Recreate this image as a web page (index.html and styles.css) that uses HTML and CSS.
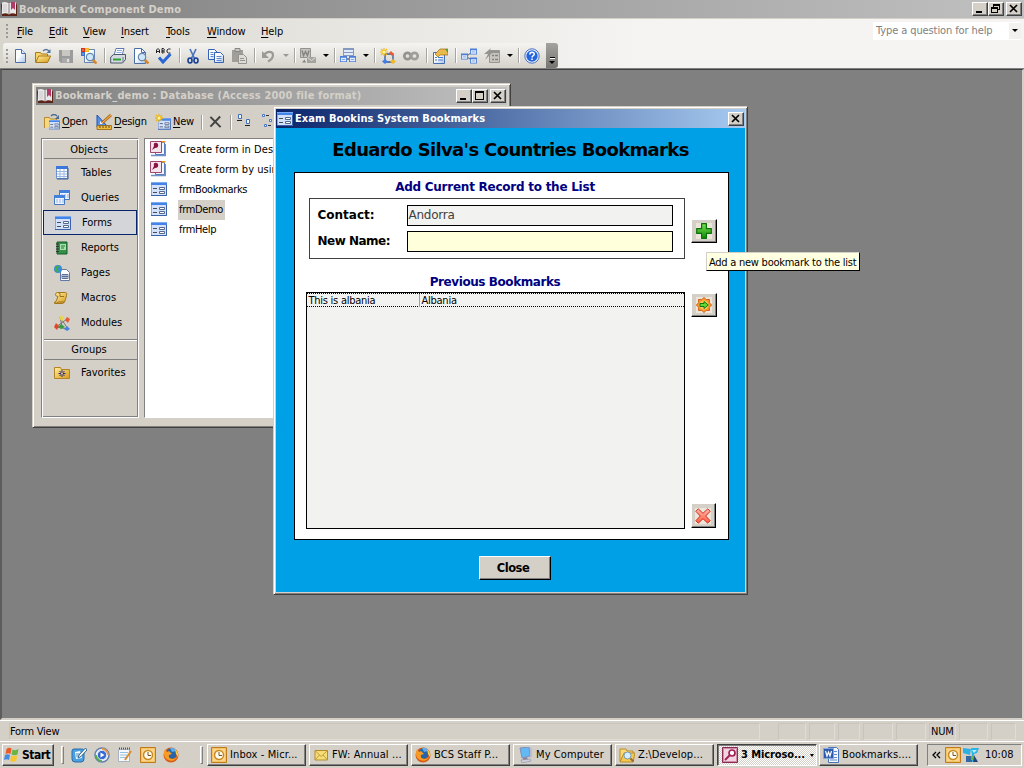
FILE: index.html
```html
<!DOCTYPE html>
<html lang="en">
<head>
<meta charset="utf-8">
<title>Bookmark Component Demo</title>
<link rel="stylesheet" href="styles.css">
</head>
<body>
<svg class="sprite" aria-hidden="true">
  <defs>
    <linearGradient id="gBlue" x1="0" y1="0" x2="0" y2="1"><stop offset="0" stop-color="#8fc0ff"/><stop offset="1" stop-color="#1c55c8"/></linearGradient>
    <linearGradient id="gGold" x1="0" y1="0" x2="1" y2="1"><stop offset="0" stop-color="#fff0a0"/><stop offset="1" stop-color="#d89a18"/></linearGradient>
    <linearGradient id="gPaper" x1="0" y1="0" x2="1" y2="1"><stop offset=".4" stop-color="#fff"/><stop offset="1" stop-color="#a9c4ea"/></linearGradient>
    <linearGradient id="gGreen" x1="0" y1="0" x2="0" y2="1"><stop offset="0" stop-color="#7be04e"/><stop offset="1" stop-color="#0c8c0c"/></linearGradient>
    <linearGradient id="gRed" x1="0" y1="0" x2="0" y2="1"><stop offset="0" stop-color="#ffb9a8"/><stop offset="1" stop-color="#ff5a3c"/></linearGradient>
  </defs>
  <symbol id="book" viewBox="0 0 16 16"><path d="M0 4l1-2h14l1 2v11H1z" fill="#5c2418"/><path d="M1 1.500q4-1.500 7 1 3-2.500 7-1V13q-4-1.500-7 .5-3-2-7-.5z" fill="#e9e7e7"/><path d="M8 3v10" stroke="#8b8080"/><path d="M10 1h4v8l-2-2-2 2z" fill="#b23a68"/><path d="M3 3v8M5 3v8" stroke="#c9c7c9"/></symbol>
  <symbol id="new" viewBox="0 0 16 16"><path d="M3.500 1.500h6l4 4v9h-10z" fill="url(#gPaper)" stroke="#4a6ea8"/><path d="M9.500 1.500v4h4" fill="#dbe7fa" stroke="#4a6ea8"/></symbol>
  <symbol id="open" viewBox="0 0 16 16"><path d="M.5 14V4.500h5l1 1.500h6v2.500" fill="#fbd468" stroke="#a57a1c"/><path d="M.7 14.500l3-6.500h12l-3.200 6.500z" fill="url(#gGold)" stroke="#a57a1c"/><path d="M8 3q3-3 6 0" fill="none" stroke="#55779c" stroke-width="1.300"/><path d="M15.500 1v4h-4z" fill="#55779c"/></symbol>
  <symbol id="save" viewBox="0 0 16 16"><path d="M1 2h14v13H3l-2-2z" fill="#9b9b9b"/><path d="M4 2h8v6H4z" fill="#c9c7c2"/><path d="M4 10h8v5H4z" fill="#aaa"/><path d="M9 11h2v3H9z" fill="#e2e0da"/></symbol>
  <symbol id="lens" viewBox="0 0 16 16"><path d="M10.500 10.500l4 4" stroke="#d7882c" stroke-width="2.600"/><circle cx="8" cy="8" r="3.700" fill="#cfe7fb" stroke="#6787ab" stroke-width="1.200"/></symbol>
  <symbol id="search" viewBox="0 0 16 16"><path d="M3.500 1.500h10v13h-10z" fill="url(#gPaper)" stroke="#6685b5"/><path d="M0 0h4v4H0z" fill="#d63515"/><path d="M4 0h4v4H4z" fill="#f4b51d"/><path d="M0 4h4v4H0z" fill="#386fd6"/><path d="M1.500 1.500h1v1h-1zM5.500 1.500h1v1h-1zM1.500 5.500h1v1h-1z" fill="#fff"/><use href="#lens" width="16" height="16" x="1" y="1"/></symbol>
  <symbol id="print" viewBox="0 0 16 16"><path d="M6 .5h8l-2 7H4z" fill="#fff" stroke="#5c7ab0"/><path d="M7 2.500h5M6.500 4.500h5" stroke="#8aa8dc"/><path d="M.7 9l3-2.500h11.800V11.500L12.500 15H.7z" fill="#d4d9e2" stroke="#4c566c"/><path d="M3 11.500h8" stroke="#2da32d" stroke-width="2"/><path d="M13 9v5" stroke="#6c7890"/></symbol>
  <symbol id="preview" viewBox="0 0 16 16"><path d="M1.500.5h7l4 4v11h-11z" fill="url(#gPaper)" stroke="#4a6ea8"/><path d="M8.500.5v4h4" fill="none" stroke="#4a6ea8"/><use href="#lens" width="16" height="16" x="1" y="1"/></symbol>
  <symbol id="spell" viewBox="0 0 16 16"><path d="M.5 5V2L2 .5 3.500 2v3M.5 3.500h3M6 .5v4.500h1.500l1-1-1-1H6h1.500l1-1-1-1.500zM14.500 1h-2l-1.500 1v2l1.500 1h2" fill="none" stroke="#222"/><path d="M3 9.500l4 4.500 7.500-8" fill="none" stroke="#2a66d6" stroke-width="3"/></symbol>
  <symbol id="cut" viewBox="0 0 16 16"><path d="M5 1l4.500 9.500M11 1L6.500 10.500" stroke="#4c76bd" stroke-width="1.700"/><ellipse cx="5" cy="12.500" rx="2" ry="2.500" fill="none" stroke="#173f96" stroke-width="1.600"/><ellipse cx="11" cy="12.500" rx="2" ry="2.500" fill="none" stroke="#173f96" stroke-width="1.600"/></symbol>
  <symbol id="copy" viewBox="0 0 16 16"><g fill="url(#gPaper)" stroke="#3463b5"><path d="M.5 1.500h6l3 3v7h-9z"/><path d="M6.500 4.500h6l3 3v7h-9z"/></g><path d="M2.500 4.500h3M2.500 6.500h3M2.500 8.500h3M8.500 8.500h5M8.500 10.500h5M8.500 12.500h5" stroke="#5b87cf"/></symbol>
  <symbol id="paste" viewBox="0 0 16 16"><path d="M1 2h11v12H1z" fill="#a09e99"/><path d="M4 .5h5v3H4z" fill="#c8c5bf" stroke="#8a8884"/><path d="M7.500 6.500h5l3 3v6h-8z" fill="#dedcd6" stroke="#95938e"/><path d="M9 10.500h4M9 12.500h5" stroke="#95938e"/></symbol>
  <symbol id="undo" viewBox="0 0 16 16"><path d="M4 7c3-4.500 9-4 9 0q0 4-5 6.500" fill="none" stroke="#9c9a95" stroke-width="2.200"/><path d="M2 3v7h7z" fill="#9c9a95"/></symbol>
  <symbol id="officelinks" viewBox="0 0 16 16"><path d="M.5.500h10v9H.5z" fill="#c5c3bd" stroke="#95938e"/><path d="M2 2.500l1.500 5 2-4 2 4 1.500-5" fill="none" stroke="#85837f" stroke-width="1.400"/><path d="M7 9h9v6H7z" fill="#a5a39e"/><path d="M7.500 9.500l4 3 4-3" fill="none" stroke="#ddd"/><path d="M2 14.500l2.500-3 1.500 3z" fill="#85837f"/></symbol>
  <symbol id="formmini" viewBox="0 0 8 7"><path d="M0 0h8v7H0z" fill="#4a7ed8"/><path d="M1 2h6v4H1z" fill="#e5efff"/><path d="M2 4h4" stroke="#759bdc"/></symbol>
  <symbol id="analyze" viewBox="0 0 16 16"><path d="M3 0h11v8H3z" fill="#819abe"/><path d="M4 2h9v5H4z" fill="#e3ebf8"/><path d="M4 4.500h9" stroke="#819abe"/><use href="#formmini" width="7" height="8" x="0" y="7"/><use href="#formmini" width="7" height="8" x="9" y="7"/><path d="M7 11h2" stroke="#234"/></symbol>
  <symbol id="code" viewBox="0 0 16 16"><path d="M5 6h8v8H5z" fill="none" stroke="#31569c" stroke-width="1.300"/><path d="M4 0v8M0 4h8M1 1l6 6M7 1L1 7" stroke="#f0b91d" stroke-width="1.200"/><circle cx="4" cy="4" r="1.500" fill="#fff8a0"/><path d="M11 3l3 3-2 2-3-3z" fill="#e75c35"/><path d="M5 11l3 2.500L5 16l-3-2.500z" fill="#3f7eea"/><path d="M13 11l3 2.500-3 2.500-3-2.500z" fill="#edba24"/></symbol>
  <symbol id="infinity" viewBox="0 0 16 16"><circle cx="4.500" cy="8" r="3.200" fill="none" stroke="#95938f" stroke-width="2.700"/><circle cx="11.500" cy="8" r="3.200" fill="none" stroke="#a19f9a" stroke-width="2.700"/></symbol>
  <symbol id="props" viewBox="0 0 16 16"><path d="M1.500 4.500h11v11h-11z" fill="url(#gPaper)" stroke="#4570ae"/><path d="M3 9.500h2M6 9.500h5M3 12h2M6 12h5" stroke="#477aca"/><path d="M3 6l5-5h8v6h-3L8 7 6 9z" fill="#eab94b" stroke="#9d6b13" stroke-width=".7"/><path d="M13 1h3v4z" fill="#579b3e"/></symbol>
  <symbol id="relations" viewBox="0 0 16 16"><path d="M6 8L12 3M6 9l6 4" stroke="#555"/><use href="#formmini" width="7" height="7" x="0" y="5"/><use href="#formmini" width="7" height="7" x="9" y="0"/><use href="#formmini" width="7" height="7" x="9" y="9"/></symbol>
  <symbol id="build" viewBox="0 0 16 16"><path d="M5.500 2.500h10v12h-10z" fill="#c7c5bf" stroke="#999792"/><path d="M5 4h10M8 7.500h2M11 7.500h3M8 11.500h2M11 11.500h3" stroke="#85837f" stroke-width="1.500"/><path d="M7 0L0 6h4l-3 6 8-8H5z" fill="#96948f"/></symbol>
  <symbol id="help" viewBox="0 0 16 16"><circle cx="8" cy="8" r="7.200" fill="#eef4ff" stroke="#4a70bc"/><circle cx="8" cy="8" r="5.700" fill="#2566dd"/><path d="M5.800 6.500q0-2.300 2.200-2.300t2.200 2q0 1-1.200 1.600-1 .5-1 1.600" fill="none" stroke="#fff" stroke-width="1.500"/><path d="M7.200 10.500h1.600v1.500H7.200z" fill="#fff"/></symbol>
  <symbol id="form" viewBox="0 0 16 14"><path d="M.5.500h15v13H.5z" fill="#d3e1fa" stroke="#86a5dc"/><path d="M0 0h16v3H0z" fill="#4584e6"/><path d="M0 0h16v1H0z" fill="#7aabf2"/><path d="M0 13.500h15.500V3" fill="none" stroke="#3a62ab"/><path d="M2 6.500h4M2 10.500h4" stroke="#444c5c"/><path d="M8.500 5.500h5v2h-5zM8.500 9.500h5v2h-5z" fill="#fff" stroke="#55698c"/></symbol>
  <symbol id="table" viewBox="0 0 16 16"><path d="M2.500 1.500h11v12h-11z" fill="#fff" stroke="#6b91cf"/><path d="M2 1h12v3H2z" fill="#3c78dc"/><path d="M3 6.500h10M3 9h10M3 11.500h10M6 4v9M10 4v9" stroke="#9cb9e6"/><path d="M14 3v11H3" fill="none" stroke="#3b5e96"/></symbol>
  <symbol id="query" viewBox="0 0 16 16"><g id="qwin"><path d="M5.500.500h10v9h-10z" fill="#eef4ff" stroke="#4877c2"/><path d="M5 0h11v3H5z" fill="#4481df"/><path d="M7 5h2M10 5h2M13 5h2M7 7h2M10 7h2M13 7h2" stroke="#8fb0e5"/></g><use href="#qwin" x="-5" y="5"/></symbol>
  <symbol id="report" viewBox="0 0 16 16"><path d="M3 2h10v12H3z" fill="#329146" stroke="#185d2b"/><path d="M6 4h6v6H6z" fill="#a8dfae"/><path d="M7 6h4M7 8h3" stroke="#237435"/><path d="M2 4h3M2 6.500h3M2 9h3M2 11.500h3" stroke="#333"/></symbol>
  <symbol id="page" viewBox="0 0 16 16"><path d="M6.500 4.500h6l3 3v8h-9z" fill="#fff" stroke="#6078a6"/><path d="M8 9.500h6v4H8zM8 11.500h6M10 9.500v4M12 9.500v4" fill="none" stroke="#506891" stroke-width=".9"/><circle cx="4" cy="4" r="4" fill="#388cd4"/><path d="M1 2q3-3 4 0L3 4l2 3q-4 1-4-5z" fill="#43ac46"/></symbol>
  <symbol id="macro" viewBox="0 0 16 16"><path d="M3.500 2.500q-2 0-2 2t2.500 2l-2 5q-2 0-1.500 2h8q2 0 3-4l1-4q1-3-1-3z" fill="url(#gGold)" stroke="#a37820"/><path d="M4 2.500q3 0 2 4h4M1 13q2 1 3-1h6" fill="none" stroke="#9c701c"/></symbol>
  <symbol id="module" viewBox="0 0 16 16"><path d="M2 12l11-8M6 2l8 12M2 12l12 2M6 2l2 9" stroke="#777"/><path d="M7 0l3 2-1 4-4-2z" fill="#e9d554"/><path d="M13 2l3 2-2 4-3-3z" fill="#e95836"/><path d="M2 8l3 3-2 4-3-3z" fill="#e64627"/><path d="M7 9l4 3-4 2-3-2z" fill="#3b9c45"/><path d="M13 11l3 3-3 2-3-2z" fill="#4b83e3"/></symbol>
  <symbol id="fav" viewBox="0 0 16 16"><path d="M.5 13.500v-11h6l1 2h8v9z" fill="url(#gGold)" stroke="#b38324"/><path d="M8 5v7M4.500 8.500h7M5.500 6l5 5M10.500 6l-5 5" stroke="#262687"/><circle cx="8" cy="8.500" r="1" fill="#ffd454"/></symbol>
  <symbol id="wizard" viewBox="0 0 16 16"><path d="M5.500 1.500h9v12h-9z" fill="#f4f7ff" stroke="#4f77b9"/><path d="M5 .5h10.500" stroke="#ee9b25" stroke-width="2"/><path d="M1 14.500h14.500V3" stroke="#7191c6" stroke-width="1.500" fill="none"/><path d="M.5.500h11v11H.5z" fill="#f4e5ec" stroke="#a04570"/><path d="M7 2q-4-1-3 3L2 9l3-2q4 0 3-4z" fill="#8b1444"/></symbol>
  <symbol id="openform" viewBox="0 0 16 16"><path d="M.5 14V3.500h5l1 1.500h6v6" fill="#f9d87c" stroke="#b48b31"/><path d="M7 2q3-3 6 0" fill="none" stroke="#45698f" stroke-width="1.300"/><path d="M15 1v4h-4z" fill="#45698f"/><use href="#form" width="11" height="9.600" x="5" y="6"/></symbol>
  <symbol id="design" viewBox="0 0 16 16"><path d="M1 1v12h11z" fill="#5690ec" stroke="#1c55b0"/><path d="M4 7v3h3z" fill="#f5f7ff"/><path d="M15 1L6 9" stroke="#b76d1b" stroke-width="3"/><path d="M15 1L6 9" stroke="#f7bf56"/><path d="M1 11.500h14.500v4H1z" fill="#f0bc3e" stroke="#94620d" stroke-width=".8"/><path d="M4 12v2M7 12v2M10 12v2M13 12v2" stroke="#654a16"/></symbol>
  <symbol id="newform" viewBox="0 0 16 16"><use href="#form" width="13" height="12" x="3" y="4"/><path d="M4 0v8M0 4h8M1 1l6 6M7 1L1 7" stroke="#efb714" stroke-width="1.300"/><circle cx="4" cy="4" r="1.500" fill="#fff8a0"/></symbol>
  <symbol id="delete" viewBox="0 0 14 14"><path d="M1.500 1.500l11 11M12 1L1.500 12" stroke="#444" stroke-width="2.200"/></symbol>
  <symbol id="largeicons" viewBox="0 0 16 16"><g id="tiny"><path d="M1.500.5h3v4h-3z" fill="#f4f8ff" stroke="#3c6ebd"/><path d="M0 6.500h5" stroke="#222"/></g><use href="#tiny" x="8" y="5"/></symbol>
  <symbol id="smallicons" viewBox="0 0 16 16"><path d="M.5.500h2v2h-2zM7.500 5.500h2v2h-2zM2.500 10.500h2v2h-2z" fill="#fff" stroke="#4677c9"/><path d="M4 1.500h3M11 6.500h2M6 11.500h3" stroke="#333"/></symbol>
  <symbol id="plus" viewBox="0 0 16 16"><path d="M5.600.7h4.800v4.900h4.900v4.800h-4.900v4.900H5.600v-4.900H.7V5.600h4.900z" fill="url(#gGreen)" stroke="#087108" stroke-width="1.200" stroke-linejoin="round"/></symbol>
  <symbol id="goto" viewBox="0 0 16 16"><path d="M8 .4l2.200 2.300 3.200-.2-.1 3.200L15.600 8l-2.300 2.300.1 3.200-3.200-.2L8 15.600l-2.200-2.300-3.200.2.100-3.200L.4 8l2.300-2.300-.1-3.200 3.200.2z" fill="#ff9b2c" stroke="#cf5a12"/><circle cx="8" cy="8" r="4.500" fill="#ffc456"/><path d="M4 6.500h4v-2L12.300 8 8 11.500v-2H4z" fill="#64d73b" stroke="#117b12"/></symbol>
  <symbol id="cross" viewBox="0 0 16 16"><path d="M3.300.8L8 5.300 12.700.8l2.500 2.500L10.700 8l4.500 4.700-2.500 2.500L8 10.700l-4.700 4.500-2.500-2.500L5.300 8 .8 3.300z" fill="url(#gRed)" stroke="#cf3029" stroke-linejoin="round"/></symbol>
  <symbol id="flag" viewBox="0 0 16 16"><path d="M2.500 2q2.500-2 5-.5L6.500 7Q4 5.500 1.500 7z" fill="#ed5928"/><path d="M8.500 2.500q3 1.500 6-.5l-1 5.500q-3 1.500-6 0z" fill="#66b545"/><path d="M1 8q2.500-1.500 5 0l-1 5Q3 11.500 0 13z" fill="#448be2"/><path d="M7 8.500q3 1.500 6.200 0l-1 5.500q-3 1.500-6 0z" fill="#f8c72c"/></symbol>
  <symbol id="desktop" viewBox="0 0 16 16"><path d="M1 4q0-2 2-2h8q2 0 2 2v8q0 3-3 3H4q-3 0-3-3z" fill="#4ba0df" stroke="#286ca9"/><path d="M4 5l5-1 2 7-6 1z" fill="#f7fbff"/><path d="M5 7h4M5 9h3" stroke="#4788b9"/><path d="M14.500 1L8 8l-1 3 3-1.500L16 3z" fill="#f6f3e5" stroke="#31689b"/></symbol>
  <symbol id="media" viewBox="0 0 16 16"><circle cx="8" cy="8" r="7" fill="#f1f5fb" stroke="#637fad" stroke-width="1.500"/><path d="M8 1a7 7 0 0 1 7 7H8z" fill="#e79b48"/><path d="M1 8a7 7 0 0 0 7 7V8z" fill="#59aa52"/><circle cx="8" cy="8" r="4.700" fill="#3669d1" stroke="#dce9ff"/><path d="M6.500 5.500v5l4-2.500z" fill="#fff"/></symbol>
  <symbol id="notepad" viewBox="0 0 16 16"><path d="M1.500 2.500h11v12h-11z" fill="#f7f8fb" stroke="#a9b4c0"/><path d="M3 5.500h8M3 8h7M3 10.500h6" stroke="#9cc0df"/><path d="M2 1.500h11" stroke="#556" stroke-dasharray="1 1" stroke-width="2"/><path d="M14 4L8 13" stroke="#d68c32" stroke-width="2"/></symbol>
  <symbol id="outlook" viewBox="0 0 16 16"><path d="M.5.500h15v15H.5z" fill="#f4c468" stroke="#c07b18"/><path d="M2 2h12v12H2z" fill="#fbd58c"/><circle cx="8" cy="8" r="4.500" fill="#fffdf3" stroke="#c98a20" stroke-width="1.500"/><path d="M8 5v3.500h3" fill="none" stroke="#77521a"/></symbol>
  <symbol id="firefox" viewBox="0 0 16 16"><circle cx="8" cy="8" r="7.500" fill="#d75d14"/><circle cx="8.500" cy="6.500" r="5.300" fill="#2864a8"/><path d="M7 1q5-1 6 3l-4 1z" fill="#5daee8"/><path d="M2 2q-3 8 3 11 7 3 10-5-1 3-5 4-5 0-4-4l3-1-3-3-2 1z" fill="#f99c25"/><path d="M12 2q4 4 3 8l-2-3z" fill="#ffd047"/></symbol>
  <symbol id="mail" viewBox="0 0 16 16"><path d="M2 3.500h12.500v9.500H2z" fill="#f5dd78" stroke="#b58b2a"/><path d="M2 3.500l6.200 6 6.300-6M2 13l4.500-5M14.500 13L10 8" fill="none" stroke="#c39a35"/></symbol>
  <symbol id="computer" viewBox="0 0 16 16"><path d="M3 1l9-1 1 9-8 2z" fill="#62b9f3" stroke="#828eb8"/><path d="M13 0l2 2v8l-2 1z" fill="#b9bcd4"/><path d="M6 11l4-1 1 3-5 1z" fill="#87879f"/><path d="M4 13l9-1 1 2-9 2z" fill="#d0d0db" stroke="#8889a6" stroke-width=".6"/></symbol>
  <symbol id="folder" viewBox="0 0 16 16"><path d="M1 14V2h6l1 2h6v10z" fill="#f9da77" stroke="#b98d2b"/><path d="M5 6h11l-2 9H1z" fill="#f6c84e" stroke="#b98d2b"/><circle cx="8.500" cy="8.500" r="3.500" fill="#d4efff" stroke="#789ab2"/><path d="M11.500 11.500l3 3" stroke="#986b37" stroke-width="2"/></symbol>
  <symbol id="access" viewBox="0 0 16 16"><path d="M.5.500h15v15H.5z" fill="#d08ba6" stroke="#8b2a52"/><path d="M2 2h12v12H2z" fill="#f3d5e1"/><circle cx="10" cy="6" r="3" fill="#fff" stroke="#a02255" stroke-width="1.700"/><path d="M8 8l-5 5" stroke="#a02255" stroke-width="2"/></symbol>
  <symbol id="word" viewBox="0 0 16 16"><path d="M5.500.500h8l2 2v13h-10z" fill="#f4f8ff" stroke="#4773b8"/><path d="M10 4.500h4M10 7.500h4M10 10.500h4M7 13h7" stroke="#6088c6"/><path d="M.5 1.500h10v10H.5z" fill="#2c5aae" stroke="#87a6da"/><path d="M2.500 4l1.500 5 1.500-4L7 9l1.500-5" fill="none" stroke="#fff" stroke-width="1.200"/></symbol>
  <symbol id="network" viewBox="0 0 16 16"><path d="M0 1l8 1-1 6-7-2zM8 1h8l-2 5-3 1-1 8-4-2 3-5z" fill="#2bb2e3"/><path d="M9 3h5l-3 3z" fill="#b4efff"/><path d="M3 9h6v6H3z" fill="#3568a1"/><path d="M11 8l4 7h-5z" fill="#22447c"/><path d="M8 9h2v4H8z" fill="#62b84a"/></symbol>
  <symbol id="min" viewBox="0 0 10 10"><path d="M1 7h6v2H1z"/></symbol>
  <symbol id="max" viewBox="0 0 10 10"><path d="M0 0h9v9H0zM1 2v6h7V2z" fill-rule="evenodd"/></symbol>
  <symbol id="restore" viewBox="0 0 10 10"><path d="M2 0h7v6H7V5h1V2H3v1H2zM0 3h7v6H0zM1 5v3h5V5z" fill-rule="evenodd"/></symbol>
  <symbol id="x" viewBox="0 0 10 10"><path d="M1 1l7 7M8 1L1 8" stroke="#000" stroke-width="1.700"/></symbol>
</svg>

<div class="app">
  <header class="titlebar app-title">
    <svg class="i16"><use href="#book"/></svg><span class="caption">Bookmark Component Demo</span>
    <span class="wbtns"><i class="wbtn"><svg><use href="#min"/></svg></i><i class="wbtn"><svg><use href="#restore"/></svg></i><i class="wbtn gap"><svg><use href="#x"/></svg></i></span>
  </header>
  <div class="bars">
    <nav class="menu">
      <i class="grip"></i>
      <span class="m1"><u>F</u>ile</span><span class="m2"><u>E</u>dit</span><span class="m3"><u>V</u>iew</span><span class="m4"><u>I</u>nsert</span><span class="m5"><u>T</u>ools</span><span class="m6"><u>W</u>indow</span><span class="m7"><u>H</u>elp</span>
      <div class="ask"><span>Type a question for help</span><i class="drop"><b class="tri"></b></i></div>
    </nav>
    <div class="toolbar">
      <i class="grip"></i>
      <i class="cell"><svg><use href="#new"/></svg></i><i class="cell"><svg><use href="#open"/></svg></i><i class="cell"><svg><use href="#save"/></svg></i><i class="cell"><svg><use href="#search"/></svg></i><i class="sep"></i>
      <i class="cell"><svg><use href="#print"/></svg></i><i class="cell"><svg><use href="#preview"/></svg></i><i class="cell"><svg><use href="#spell"/></svg></i><i class="sep"></i>
      <i class="cell"><svg><use href="#cut"/></svg></i><i class="cell"><svg><use href="#copy"/></svg></i><i class="cell"><svg><use href="#paste"/></svg></i><i class="sep"></i>
      <i class="cell"><svg><use href="#undo"/></svg></i><i class="arrow off"><b class="tri"></b></i><i class="sep"></i>
      <i class="cell"><svg><use href="#officelinks"/></svg></i><i class="arrow"><b class="tri"></b></i><i class="sep"></i>
      <i class="cell"><svg><use href="#analyze"/></svg></i><i class="arrow"><b class="tri"></b></i><i class="sep"></i>
      <i class="cell"><svg><use href="#code"/></svg></i><i class="cell"><svg><use href="#infinity"/></svg></i><i class="sep"></i>
      <i class="cell"><svg><use href="#props"/></svg></i><i class="sep"></i>
      <i class="cell"><svg><use href="#relations"/></svg></i><i class="cell"><svg><use href="#build"/></svg></i><i class="arrow"><b class="tri"></b></i><i class="sep"></i>
      <i class="cell"><svg><use href="#help"/></svg></i>
      <i class="endcap"><b class="dash"></b><b class="tri"></b></i>
    </div>
  </div>

  <main class="mdi">
    <section class="window db">
      <header class="titlebar">
        <svg class="i16"><use href="#book"/></svg><span class="caption">Bookmark_demo : Database (Access 2000 file format)</span>
        <span class="wbtns"><i class="wbtn"><svg><use href="#min"/></svg></i><i class="wbtn"><svg><use href="#max"/></svg></i><i class="wbtn gap"><svg><use href="#x"/></svg></i></span>
      </header>
      <div class="dbtools">
        <svg class="i16"><use href="#openform"/></svg><span class="t-open"><u>O</u>pen</span>
        <svg class="i16"><use href="#design"/></svg><span class="t-design"><u>D</u>esign</span>
        <svg class="i16"><use href="#newform"/></svg><span class="t-new"><u>N</u>ew</span>
        <i class="vline"></i><svg class="del"><use href="#delete"/></svg><i class="vline"></i>
        <svg class="i16 large"><use href="#largeicons"/></svg><svg class="i16"><use href="#smallicons"/></svg>
      </div>
      <div class="dbbody">
        <aside class="side">
          <h4>Objects</h4>
          <ul>
            <li><svg class="i16"><use href="#table"/></svg>Tables</li>
            <li><svg class="i16"><use href="#query"/></svg>Queries</li>
            <li class="sel"><svg class="i16"><use href="#form"/></svg>Forms</li>
            <li><svg class="i16"><use href="#report"/></svg>Reports</li>
            <li><svg class="i16"><use href="#page"/></svg>Pages</li>
            <li><svg class="i16"><use href="#macro"/></svg>Macros</li>
            <li><svg class="i16"><use href="#module"/></svg>Modules</li>
          </ul>
          <h4 class="groups">Groups</h4>
          <ul><li><svg class="i16"><use href="#fav"/></svg>Favorites</li></ul>
        </aside>
        <ul class="files">
          <li class="wiz"><svg class="i16"><use href="#wizard"/></svg><span>Create form in Design view</span></li>
          <li class="wiz"><svg class="i16"><use href="#wizard"/></svg><span>Create form by using wizard</span></li>
          <li><svg class="i16 f"><use href="#form"/></svg><span>frmBookmarks</span></li>
          <li><svg class="i16 f"><use href="#form"/></svg><span class="cur">frmDemo</span></li>
          <li><svg class="i16 f"><use href="#form"/></svg><span>frmHelp</span></li>
        </ul>
      </div>
    </section>

    <section class="window dlg">
      <header class="titlebar active">
        <svg class="i16 f"><use href="#form"/></svg><span class="caption">Exam Bookins System Bookmarks</span>
        <span class="wbtns"><i class="wbtn"><svg><use href="#x"/></svg></i></span>
      </header>
      <div class="client">
        <h1>Eduardo Silva's Countries Bookmarks</h1>
        <div class="panel">
          <div class="main">
            <h2 class="h-add">Add Current Record to the List</h2>
            <div class="fields">
              <label class="l1">Contact:</label><div class="input ro">Andorra</div>
              <label class="l2">New Name:</label><div class="input"></div>
            </div>
            <h2 class="h-prev">Previous Bookmarks</h2>
            <div class="list"><div class="row"><span>This is albania</span><span>Albania</span></div></div>
          </div>
          <div class="actions">
            <button class="b1"><svg><use href="#plus"/></svg></button>
            <button class="b2"><svg><use href="#goto"/></svg></button>
            <button class="b3"><svg><use href="#cross"/></svg></button>
          </div>
        </div>
        <button class="close">Close</button>
      </div>
    </section>
    <div class="tooltip"><span>Add a new bookmark to the list</span></div>
  </main>

  <div class="status">
    <span class="cellbox first">Form View</span>
    <span class="cellbox s1"></span><span class="cellbox s2"></span><span class="cellbox s3"></span><span class="cellbox s4"></span><span class="cellbox s5"></span><span class="cellbox num">NUM</span><span class="cellbox s6"></span><span class="cellbox s7"></span>
  </div>

  <footer class="taskbar">
    <div class="tb start"><svg class="i16"><use href="#flag"/></svg><b>Start</b></div>
    <i class="handle h1"></i>
    <div class="quick"><svg class="i16"><use href="#desktop"/></svg><svg class="i16"><use href="#media"/></svg><svg class="i16"><use href="#notepad"/></svg><svg class="i16"><use href="#outlook"/></svg><svg class="i16"><use href="#firefox"/></svg></div>
    <i class="handle h2"></i>
    <div class="tasks">
      <div class="tb"><svg class="i16"><use href="#outlook"/></svg><span>Inbox - Micr...</span></div>
      <div class="tb"><svg class="i16"><use href="#mail"/></svg><span>FW: Annual ...</span></div>
      <div class="tb"><svg class="i16"><use href="#firefox"/></svg><span>BCS Staff P...</span></div>
      <div class="tb"><svg class="i16"><use href="#computer"/></svg><span>My Computer</span></div>
      <div class="tb"><svg class="i16"><use href="#folder"/></svg><span>Z:\Develop...</span></div>
      <div class="tb on"><svg class="i16"><use href="#access"/></svg><span>3 Microso...</span><b class="tri"></b></div>
      <div class="tb"><svg class="i16"><use href="#word"/></svg><span>Bookmarks....</span></div>
    </div>
    <div class="tray"><svg class="chev" viewBox="0 0 9 8"><path d="M4 1L1 4l3 3M8 1L5 4l3 3" fill="none" stroke="#000" stroke-width="1.300"/></svg><svg class="i16"><use href="#outlook"/></svg><svg class="i16"><use href="#network"/></svg><span>10:08</span></div>
  </footer>
</div>
</body>
</html>
```
FILE: styles.css
```css
* { box-sizing: border-box; margin: 0; padding: 0; }
body { width: 1024px; height: 768px; overflow: hidden; background: #d4d0c8; color: #000;
  font: 11px/14px "DejaVu Sans Condensed", "DejaVu Sans", sans-serif; font-stretch: condensed; letter-spacing: -.25px; white-space: nowrap; }
i { font-style: normal; }
u { text-underline-offset: 2px; text-decoration-thickness: 1px; }
ul { list-style: none; }
svg { display: block; flex: none; overflow: visible; }
.sprite { position: absolute; width: 0; height: 0; }
.i16 { width: 16px; height: 16px; }
.i16.f { height: 14px; }
.tri { width: 0; height: 0; border: 3.500px solid transparent; border-top-color: #000; border-bottom: 0; border-top-width: 3px; }
.app { width: 1024px; height: 768px; display: flex; flex-direction: column; }

/* title bars and caption buttons */
.titlebar { height: 18px; flex: none; display: flex; align-items: center; padding: 0 1px; background: linear-gradient(90deg, #808080, #c0c0c0); color: #d4d0c8; }
.titlebar .caption { font-weight: bold; margin-left: 2px; flex: 1; letter-spacing: .14px; }
.titlebar.active { background: linear-gradient(90deg, #0a246a, #a6caf0); color: #fff; padding-top: 1px; }
.titlebar.active .caption { letter-spacing: .08px; }
.wbtns { display: flex; }
.wbtn { width: 16px; height: 14px; padding: 2px 0 0 3px; background: #d4d0c8; border: 1px solid; border-color: #fff #404040 #404040 #fff; box-shadow: inset -1px -1px #808080; }
.wbtn svg { width: 10px; height: 10px; margin: -1px 0 0 -1px; }
.wbtn.gap { margin-left: 2px; }
.titlebar.app-title { padding-right: 2px; }
.app-title .caption { padding-top: 1px; }

/* menu and toolbar */
.bars { height: 51px; flex: none; border-top: 1px solid #d4d0c8; border-bottom: 1px solid #808080; background: linear-gradient(90deg, #d8d5cd, #f5f4f2 650px); }
.menu { height: 24px; display: flex; align-items: center; padding-left: 6px; letter-spacing: -.1px; }
.menu > span { flex: none; padding-top: 1px; }
.grip { width: 3px; height: 14px; flex: none; background: radial-gradient(circle at 1px 1px, #999 1px, transparent 1.200px) 0 0 / 4px 4px; }
.m1 { width: 32px; margin-left: 8px; } .m2 { width: 34px; } .m3 { width: 38px; } .m4 { width: 45px; } .m5 { width: 41px; } .m6 { width: 54px; }
.ask { margin-left: auto; margin-right: 3px; width: 148px; height: 18px; background: #fff; color: #808080; display: flex; align-items: center; padding-left: 3px; margin-top: -1px; }
.ask .drop { margin-left: auto; width: 12px; height: 16px; background: #f2f1ef; display: flex; align-items: center; justify-content: center; }
.toolbar { width: 555px; height: 25px; margin-left: 3px; padding-left: 3px; display: flex; align-items: center; border-radius: 3px; background: linear-gradient(#f5f4f2, #d5d2ca); overflow: hidden; }
.cell { width: 23px; flex: none; padding-left: 3px; }
.cell svg { width: 16px; height: 16px; }
.sep { width: 6px; height: 15px; flex: none; background: linear-gradient(90deg, transparent 3px, #a7a5a0 3px 4px, #fff 4px 5px, transparent 5px); }
.arrow { width: 11px; flex: none; padding-left: 3px; }
.arrow .tri { display: block; border-width: 3px 3px 0; }
.off .tri { border-top-color: #999; }
.endcap { width: 12px; height: 25px; margin-left: auto; background: linear-gradient(#a5a39f, #777571); display: flex; flex-direction: column; align-items: center; justify-content: flex-end; gap: 2px; padding-bottom: 4px; }
.dash { width: 5px; height: 2px; background: #000; border-bottom: 1px solid #fff; }

/* workspace */
.mdi { flex: 1; position: relative; background: #808080; border: 2px solid #d4d0c8; border-top: 1px solid #404040; border-left-color: #5c5c5c; }
.window { position: absolute; background: #d4d0c8; border: 1px solid; border-color: #d4d0c8 #404040 #404040 #d4d0c8; box-shadow: inset 1px 1px #fff, inset -1px -1px #808080; display: flex; flex-direction: column; }
.db { left: 30px; top: 13px; width: 479px; height: 345px; padding: 3px; }
.dbtools { height: 33px; display: flex; align-items: center; padding: 1px 0 0 8px; }
.t-open { width: 34px; margin-left: 2px; } .t-design { width: 41px; margin-left: 2px; } .t-new { width: 28px; margin-left: 2px; }
.vline { width: 2px; height: 15px; background: #a09e99; border-right: 1px solid #fff; }
.del { width: 13px; height: 14px; margin: 0 8px 0 6px; }
.large { margin: 0 9px 0 5px; }
.dbbody { display: flex; gap: 5px; height: 280px; padding: 0 4px 0 5px; }
.side { width: 98px; border: 1px solid; border-color: #808080 #fff #fff #808080; box-shadow: inset 1px 1px #fff, inset -1px -1px #808080; padding: 1px 1px 1px 2px; }
.side h4 { height: 19px; font-weight: normal; text-align: center; line-height: 19px; border-bottom: 1px solid #808080; letter-spacing: .05px; padding-right: 3px; }
.side .groups { margin-top: 4px; height: 21px; border-top: 1px solid #808080; box-shadow: inset 0 1px #fff; }
.side li { height: 25px; display: flex; align-items: center; padding-left: 11px; gap: 11px; margin-left: -1px; letter-spacing: 0; }
.side ul { padding-top: 1px; }
.side .groups + ul { padding-top: 0; }
.side li.sel { border: 1px solid #0a246a; background: #d4d5d8; }
.sel .i16 { height: 14px; }
.files { flex: 1; background: #fff; border: 1px solid; border-color: #808080 #fff #fff #808080; padding-top: 1px; }
.files li { height: 20px; display: flex; align-items: center; padding-left: 6px; gap: 11px; letter-spacing: -.35px; }
.files li.wiz { letter-spacing: .05px; padding-left: 5px; gap: 12px; }
.files svg { margin-top: -2px; }
.files span { height: 20px; line-height: 20px; padding: 0 1px; }
.files .cur { background: #d4d0c8; padding-right: 2px; }

/* bookmarks dialog */
.dlg { left: 271px; top: 36px; width: 475px; height: 489px; padding: 2px; }
.dlg .titlebar { height: 19px; }
.client { flex: 1; background: #00a0e6; display: flex; flex-direction: column; align-items: center; }
h1 { font: bold 18px/22px "DejaVu Sans", sans-serif; font-stretch: normal; letter-spacing: -.65px; margin: 11px 0; }
.panel { width: 435px; height: 368px; margin-left: 1px; background: #fff; border: 1px solid #000; padding: 6px 0 0 11px; display: flex; }
.main { width: 379px; font-family: "DejaVu Sans", sans-serif; font-stretch: normal; }
h2 { font-size: 12px; line-height: 16px; color: #000080; text-align: center; letter-spacing: -.25px; }
.fields { width: 376px; height: 61px; margin: 3px 0 0 3px; border: 1px solid #404040; padding: 6px 0 0 8px; display: grid; grid-template-columns: 89px 266px; grid-auto-rows: 21px; row-gap: 5px; }
label { font-size: 12px; font-weight: bold; line-height: 20px; letter-spacing: -.5px; }
.l1 { letter-spacing: 0; }
.input { border: 1px solid #000; background: #ffffdc; }
.input.ro { background: #f2f2f0; color: #404040; font-size: 12px; line-height: 18px; padding-left: 1px; }
.h-prev { margin-top: 15px; letter-spacing: -.42px; }
.list { margin-top: 2px; height: 237px; border: 1px solid #000; background: #f2f2f0; }
.row { height: 14px; display: grid; grid-template-columns: 112px 1fr; border-top: 1px dotted #000; border-bottom: 1px dotted #000; font: 11px/13px "DejaVu Sans Condensed", sans-serif; font-stretch: condensed; }
.row span { padding-left: 2px; }
.row span + span { border-left: 1px solid #a0a0a0; }
button { background: #d4d0c8; border: 1px solid; border-color: #fff #000 #000 #fff; box-shadow: inset -1px -1px #808080; font: inherit; }
.actions { width: 26px; margin-left: 6px; display: flex; flex-direction: column; }
.actions button { width: 26px; height: 24px; padding: 0 0 0 4px; display: flex; align-items: center; }
.actions svg { width: 16px; height: 16px; background: #ebe5da; }
.b1 { margin-top: 40px; } .b2 { margin-top: 50px; }
.actions .b3 { margin-top: 186px; width: 25px; height: 25px; padding-left: 3px; }
.close { width: 72px; height: 24px; margin: 16px 0 0 9px; font: bold 11.500px/20px "DejaVu Sans", sans-serif; letter-spacing: -.5px; padding-right: 4px; }
.tooltip { position: absolute; left: 704px; top: 182px; width: 154px; height: 19px; background: #ffffe1; border: 1px solid; border-color: #d4d0c8 #000 #000 #d4d0c8; padding-left: 2px; line-height: 19px; }

/* status bar */
.status { height: 21px; flex: none; border-top: 1px solid #fff; display: flex; padding: 2px 8px 1px 9px; align-items: stretch; }
.cellbox { border: 1px solid; border-color: #c8c4bc #e0ddd6 #e0ddd6 #c8c4bc; line-height: 15px; margin-left: 3px; flex: none; }
.first { width: 751px; margin-left: 0; }
.s1 { width: 28px; margin-left: 18px; } .s2 { width: 26px; } .s3 { width: 22px; } .s4 { width: 30px; } .s5 { width: 30px; } .num { width: 27px; padding-left: 1px; } .s6 { width: 29px; } .s7 { width: 25px; }

/* taskbar */
.taskbar { height: 27px; flex: none; border-top: 1px solid #fff; display: flex; align-items: center; padding: 1px 2px 1px; }
.tb { height: 22px; display: flex; align-items: center; padding-left: 3px; gap: 3px; border: 1px solid; border-color: #fff #404040 #404040 #fff; box-shadow: inset -1px -1px #808080; }
.start { width: 52px; padding-left: 1px; gap: 2px; font-size: 12px; letter-spacing: -.5px; }
.handle { width: 3px; height: 18px; border: 1px solid; border-color: #fff #808080 #808080 #fff; }
.h1 { margin-left: 7px; } .h2 { margin-left: 21px; }
.quick { display: flex; gap: 7px; margin-left: 7px; }
.tasks { display: flex; gap: 3px; margin-left: 4px; }
.tasks .tb { width: 99px; letter-spacing: .1px; }
.tasks .tb.on { width: 100px; margin-right: -1px; font-weight: bold; padding-left: 4px; border-color: #404040 #fff #fff #404040; box-shadow: inset 1px 1px #808080; background: repeating-conic-gradient(#fff 0 25%, #d4d0c8 0 50%) 0 0 / 2px 2px; letter-spacing: -.1px; }
.on .tri { margin-left: auto; margin-right: 2px; border-width: 3px 2.500px 0; }
.tray { width: 95px; height: 22px; margin-left: auto; border: 1px solid; border-color: #808080 #fff #fff #808080; display: flex; align-items: center; padding-left: 4px; gap: 2px; }
.tray .chev { width: 9px; height: 8px; margin-right: 2px; }
.tray span { margin-left: 4px; letter-spacing: 0; }
```
